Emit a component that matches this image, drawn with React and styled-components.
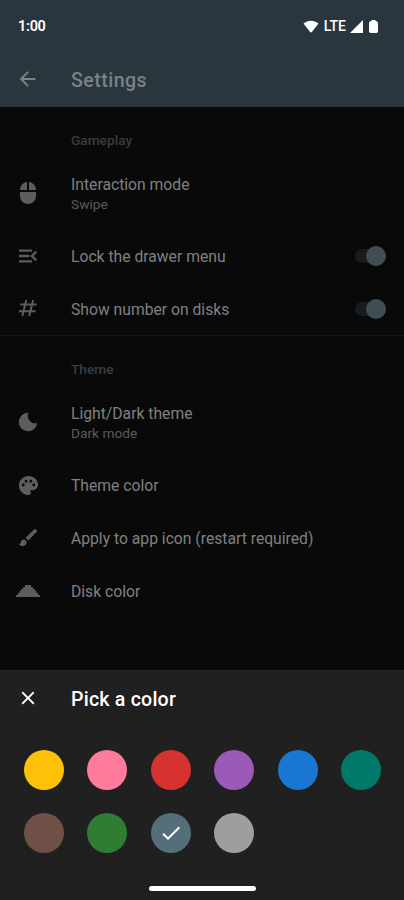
import React from 'react';
import styled, { createGlobalStyle } from 'styled-components';
import { MdMouse, MdPalette, MdBrush, MdClose, MdCheck } from 'react-icons/md';

const GlobalStyle = createGlobalStyle`
  * {
    box-sizing: border-box;
  }

  body {
    margin: 0;
    background: #090909;
    font-family: Roboto, "Liberation Sans", sans-serif;
  }
`;

const Screen = styled.div`
  display: flex;
  flex-direction: column;
  width: 404px;
  height: 900px;
  overflow: hidden;
  background: #090909;
`;

const Header = styled.header`
  height: 107px;
  background: #2a363d;
`;

const StatusBar = styled.div`
  display: flex;
  align-items: center;
  justify-content: space-between;
  height: 52px;
  padding: 0 26px 0 18px;
  color: #fff;
`;

const Time = styled.span`
  font-size: 14.5px;
  font-weight: 600;
  letter-spacing: -0.3px;
`;

const StatusIcons = styled.div`
  display: flex;
  align-items: center;
`;

const Network = styled.span`
  margin: 0 4px 0 5px;
  font-size: 14px;
  font-weight: 500;
`;

const Battery = styled.svg`
  margin-left: 6px;
`;

const AppBar = styled.div`
  display: flex;
  align-items: center;
  height: 55px;
  padding-left: 17px;
  color: #7b8184;

  svg {
    margin-bottom: 2px;
  }
`;

const Title = styled.h1`
  margin: 2px 0 0 32px;
  font-size: 19.6px;
  font-weight: 500;
  line-height: 24px;
  letter-spacing: ${(props) => props.$spacing};
`;

const List = styled.main`
  flex: 1;
`;

const Section = styled.section`
  border-bottom: ${(props) => (props.$divider ? '1px solid #131313' : 'none')};
`;

const SectionTitle = styled.h2`
  height: 50.4px;
  margin: 0;
  padding: 25px 0 0 71px;
  color: #363f44;
  font-size: 13.7px;
  font-weight: 500;
  line-height: 17px;
`;

const Row = styled.div`
  display: flex;
  align-items: center;
  height: ${(props) => (props.$tall ? '72.4px' : '52.8px')};
  padding: 0 18px 0 16px;
`;

const RowIcon = styled.div`
  display: flex;
  align-items: center;
  justify-content: center;
  width: 24px;
  margin: 0 31px 1px 0;
  color: #5d5d5d;
`;

const RowText = styled.div`
  flex: 1;
  padding-top: 1.6px;
`;

const Label = styled.div`
  color: #808080;
  font-size: 15.7px;
  line-height: 20px;
`;

const Detail = styled.div`
  color: #5b5b5b;
  font-size: 13.7px;
  line-height: 19px;
`;

const Track = styled.div`
  display: flex;
  align-items: center;
  justify-content: flex-end;
  width: 31px;
  height: 14px;
  border-radius: 7px;
  background: #181c1e;
`;

const Thumb = styled.div`
  flex: none;
  width: 20px;
  height: 20px;
  border-radius: 50%;
  background: #414d54;
`;

const Sheet = styled.section`
  display: flex;
  flex-direction: column;
  height: 230px;
  background: #202020;
  color: #fff;
`;

const SheetHeader = styled.div`
  display: flex;
  align-items: center;
  height: 57px;
  padding-left: 17px;

  svg {
    margin-bottom: 1px;
  }
`;

const Swatches = styled.div`
  display: grid;
  grid-template-columns: repeat(6, 40px);
  gap: 23.4px;
  padding: 22.6px 0 0 24px;
`;

const Swatch = styled.button`
  display: flex;
  align-items: center;
  justify-content: center;
  width: 40px;
  height: 40px;
  padding: 0;
  border: none;
  border-radius: 50%;
  background: ${(props) => props.$color};
  color: #fff;
`;

const HomeBar = styled.div`
  width: 107px;
  height: 5px;
  margin: auto auto 9px 149px;
  border-radius: 3px;
  background: #fff;
`;

const BackIcon = () => (
  <svg width="22" height="22" viewBox="0 0 22 22" fill="none" stroke="currentColor" strokeWidth="2">
    <path d="M18.4 11H4.6M11.1 3.9L4 11l7.1 7.1" />
  </svg>
);

const DrawerIcon = () => (
  <svg width="20" height="14" viewBox="0 0 20 14" fill="none" stroke="currentColor" strokeWidth="2.3">
    <path d="M1 1.7h13M1 7h10.5M1 12.3h13M18.3 2.6L13.9 7l4.4 4.4" />
  </svg>
);

const HashIcon = () => (
  <svg width="20" height="18" viewBox="0 0 20 18" fill="none" stroke="currentColor" strokeWidth="2">
    <path d="M8.3 1L4.3 17M15.2 1l-4 16M2.2 5.5h16.5M1 12.2h16.5" />
  </svg>
);

const MoonIcon = () => (
  <svg width="20" height="20" viewBox="0 0 20 20" fill="currentColor">
    <path d="M10.4 .7A9.3 9.3 0 1 0 19.3 10.6C17.5 12.2 14.8 11.6 12.6 9.8 9.8 7.4 9 3.6 10.4 .7z" />
  </svg>
);

const DiskIcon = () => (
  <svg width="24" height="12" viewBox="0 0 24 12" fill="currentColor">
    <path d="M9 0h6v2H9zM7 2h10v2H7zM5 4h14v2H5zM3.5 6h17v2h-17zM1.8 8h20.4v2H1.8zM0 10h24v2H0z" />
  </svg>
);

const sections = [
  {
    title: 'Gameplay',
    rows: [
      { icon: <MdMouse size={24} />, label: 'Interaction mode', detail: 'Swipe' },
      { icon: <DrawerIcon />, label: 'Lock the drawer menu', toggle: true },
      { icon: <HashIcon />, label: 'Show number on disks', toggle: true },
    ],
  },
  {
    title: 'Theme',
    rows: [
      { icon: <MoonIcon />, label: 'Light/Dark theme', detail: 'Dark mode' },
      { icon: <MdPalette size={23} />, label: 'Theme color' },
      { icon: <MdBrush size={23} />, label: 'Apply to app icon (restart required)' },
      { icon: <DiskIcon />, label: 'Disk color' },
    ],
  },
];

const colors = [
  '#ffc107', '#ff7b9c', '#d63230', '#9c5ab8', '#1976d2',
  '#00796b', '#6f5047', '#2e7d32', '#546e7a', '#9e9e9e',
];

const selected = '#546e7a';

const App = () => {
  return (
    <>
      <GlobalStyle />
      <Screen>
        <Header>
          <StatusBar>
            <Time>1:00</Time>
            <StatusIcons>
              <svg width="16" height="13" viewBox="0 0 16 13" fill="currentColor">
                <path d="M.5 3.6C4.7-.3 11.3-.3 15.5 3.6L8.9 12.1Q8 13 7.1 12.1z" />
              </svg>
              <Network>LTE</Network>
              <svg width="13" height="13" viewBox="0 0 13 13" fill="currentColor">
                <path d="M13 0v13H0z" />
              </svg>
              <Battery width="9" height="13" viewBox="0 0 9 13" fill="currentColor">
                <path d="M3 0h3l1.2 1.3Q9 1.5 9 3.2v8.1Q9 13 7.3 13H1.7Q0 13 0 11.3V3.2Q0 1.5 1.8 1.3z" />
              </Battery>
            </StatusIcons>
          </StatusBar>
          <AppBar>
            <BackIcon />
            <Title $spacing="0.45px">Settings</Title>
          </AppBar>
        </Header>

        <List>
          {sections.map((section, index) => (
            <Section key={section.title} $divider={index === 0}>
              <SectionTitle>{section.title}</SectionTitle>
              {section.rows.map((row) => (
                <Row key={row.label} $tall={!!row.detail}>
                  <RowIcon>{row.icon}</RowIcon>
                  <RowText>
                    <Label>{row.label}</Label>
                    {row.detail && <Detail>{row.detail}</Detail>}
                  </RowText>
                  {row.toggle && <Track><Thumb /></Track>}
                </Row>
              ))}
            </Section>
          ))}
        </List>

        <Sheet>
          <SheetHeader>
            <MdClose size={22} />
            <Title $spacing="0.2px">Pick a color</Title>
          </SheetHeader>
          <Swatches>
            {colors.map((color) => (
              <Swatch key={color} $color={color}>
                {color === selected && <MdCheck size={24} />}
              </Swatch>
            ))}
          </Swatches>
          <HomeBar />
        </Sheet>
      </Screen>
    </>
  );
};

export default App;
